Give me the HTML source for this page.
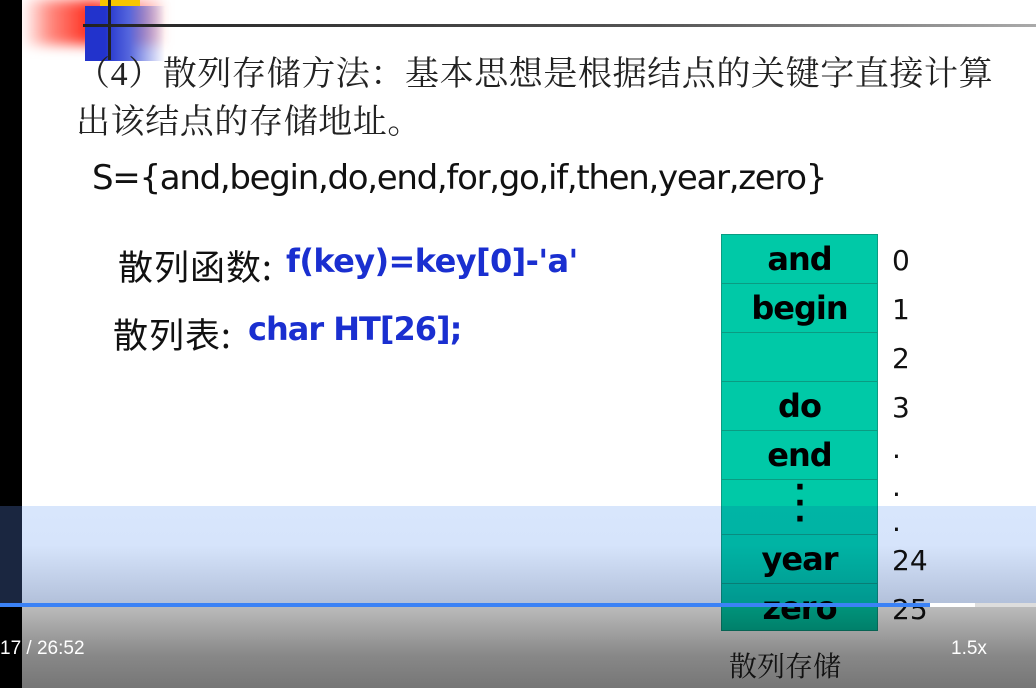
<!DOCTYPE html>
<html><head><meta charset="utf-8"><style>
body{margin:0;width:1036px;height:688px;overflow:hidden;background:#fff;position:relative;font-family:"Liberation Sans","Noto Sans CJK SC",sans-serif}
.a{position:absolute;white-space:nowrap}
.cn{font-family:"Liberation Serif","Noto Serif CJK SC",serif;color:#222;font-size:34px;letter-spacing:0.6px}
.tbl{position:absolute;left:721px;top:234px;width:155px;background:#00c9a7;border:1px solid #0a9c82}
.r{height:48px;border-bottom:1px solid #0a9c82;text-align:center;font-weight:bold;font-size:32px;line-height:48px;color:#000;font-family:"DejaVu Sans","Liberation Sans",sans-serif;letter-spacing:-1px}
.n{position:absolute;left:892px;font-size:28px;color:#111;font-family:"DejaVu Sans",sans-serif}
</style></head><body>
<div class="a" style="left:22px;top:0;width:140px;height:45px;background:linear-gradient(90deg,rgba(255,255,255,0),#ff8a80 20%,#ff2a1a 50%,rgba(255,80,80,0.2) 100%);filter:blur(6px)"></div>
<div class="a" style="left:85px;top:6px;width:80px;height:55px;background:linear-gradient(90deg,#2233cc 25%,#5566dd 55%,rgba(255,255,255,0))"></div>
<div class="a" style="left:100px;top:0;width:40px;height:6px;background:#f7c600"></div>
<div class="a" style="left:108px;top:0;width:3px;height:60px;background:#222"></div>
<div class="a" style="left:83px;top:24px;width:953px;height:3px;background:linear-gradient(90deg,#222,#555 60%,#aaa)"></div>
<div class="a" style="left:0;top:0;width:22px;height:688px;background:#000"></div>
<div class="a cn" style="left:76px;top:46px">（4）散列存储方法：基本思想是根据结点的关键字直接计算</div>
<div class="a cn" style="left:76px;top:94px">出该结点的存储地址。</div>
<div class="a" style="left:92px;top:158px;font-size:34px;color:#111;font-family:'DejaVu Sans',sans-serif;letter-spacing:-1.3px">S={and,begin,do,end,for,go,if,then,year,zero}</div>
<div class="a" style="left:118px;top:240px;font-size:35px;color:#111;font-family:'Noto Sans CJK SC',sans-serif;letter-spacing:1px">散列函数:</div>
<div class="a" style="left:286px;top:242px;font-size:32px;color:#1a2fd0;font-weight:bold;font-family:'DejaVu Sans',sans-serif;letter-spacing:-0.6px">f(key)=key[0]-'a'</div>
<div class="a" style="left:113px;top:308px;font-size:35px;color:#111;font-family:'Noto Sans CJK SC',sans-serif;letter-spacing:1px">散列表:</div>
<div class="a" style="left:248px;top:310px;font-size:32px;color:#1a2fd0;font-weight:bold;font-family:'DejaVu Sans',sans-serif;letter-spacing:-1px">char HT[26];</div>
<div class="tbl">
<div class="r">and</div><div class="r">begin</div><div class="r"></div><div class="r">do</div><div class="r">end</div>
<div class="r" style="height:54px;line-height:16px;font-size:30px">·<br>·<br>·</div>
<div class="r">year</div><div class="r" style="border:0;height:46px">zero</div>
</div>
<div class="n" style="top:244px">0</div><div class="n" style="top:293px">1</div><div class="n" style="top:342px">2</div><div class="n" style="top:391px">3</div>
<div class="n" style="top:432px">.</div><div class="n" style="top:470px">.</div><div class="n" style="top:505px">.</div>
<div class="n" style="top:544px">24</div><div class="n" style="top:593px">25</div>
<div class="a" style="left:729px;top:645px;font-size:28px;color:#222;font-family:'Noto Serif CJK SC',serif">散列存储</div>
<div class="a" style="left:0;top:506px;width:1036px;height:98px;mix-blend-mode:multiply;background:linear-gradient(180deg,#d8e6fc,#d6e4fb 40%,#b2c0da)"></div>
<div class="a" style="left:0;top:506px;width:22px;height:98px;background:#1a2640"></div>
<div class="a" style="left:0;top:606px;width:1036px;height:82px;mix-blend-mode:multiply;background:linear-gradient(180deg,#bcbcbc,#888 60%,#767676)"></div>
<div class="a" style="left:0;top:606px;width:22px;height:82px;background:#000"></div>
<div class="a" style="left:0;top:603px;width:1036px;height:4px;background:#ccc"></div>
<div class="a" style="left:975px;top:603px;width:61px;height:4px;background:#ddd"></div>
<div class="a" style="left:930px;top:603px;width:45px;height:4px;background:#fff"></div>
<div class="a" style="left:0;top:603px;width:930px;height:4px;background:#3b82f6"></div>
<div class="a" style="left:0;top:638px;font-size:19px;color:#fff">17 / 26:52</div>
<div class="a" style="left:951px;top:638px;font-size:19px;color:#fff">1.5x</div>
</body></html>
